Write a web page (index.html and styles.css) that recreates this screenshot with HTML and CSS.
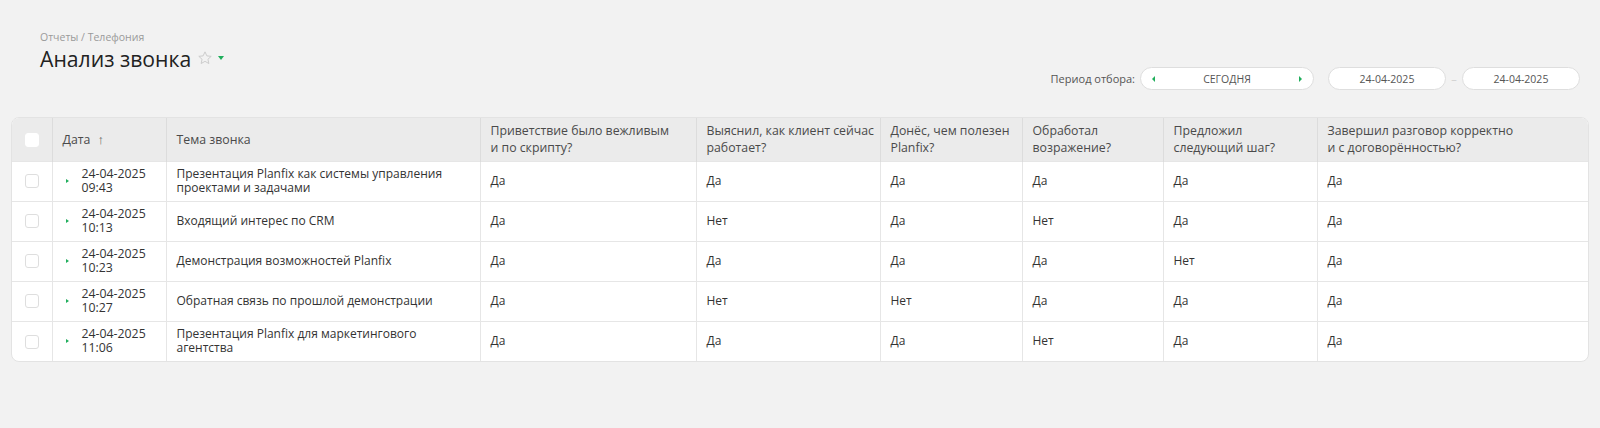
FILE: index.html
```html
<!DOCTYPE html>
<html lang="ru">
<head>
    <meta charset="UTF-8">
    <title>Анализ звонка</title>
    <link rel="stylesheet" href="styles.css">
</head>
<body>

    <div class="page-head">
        <div class="title-block">
            <div class="breadcrumb">Отчеты / Телефония</div>
            <div class="title-row">
                <h1>Анализ звонка</h1>
                <svg class="star" width="16" height="16" viewBox="0 0 24 24"><path d="M12 2.8l2.8 6 6.5.7-4.9 4.4 1.4 6.4L12 17l-5.8 3.3 1.4-6.4-4.9-4.4 6.5-.7z" fill="none" stroke="#c9c9c9" stroke-width="1.4" stroke-linejoin="round"/></svg>
                <span class="caret"></span>
            </div>
        </div>

        <div class="filter">
            <span class="filter-label">Период отбора:</span>
            <div class="pill period">
                <span class="arr arr-left"></span>
                <span>СЕГОДНЯ</span>
                <span class="arr arr-right"></span>
            </div>
            <div class="pill date">24-04-2025</div>
            <span class="dash">–</span>
            <div class="pill date">24-04-2025</div>
        </div>
    </div>

    <div class="grid-wrap">
        <table class="grid">
            <thead>
                <tr>
                    <th class="cb-cell c-cb"><span class="cb"></span></th>
                    <th class="c-date">Дата <span class="sort">↑</span></th>
                    <th class="c-topic">Тема звонка</th>
                    <th class="c-q1">Приветствие было вежливым<br>и по скрипту?</th>
                    <th class="c-q2">Выяснил, как клиент сейчас<br>работает?</th>
                    <th class="c-q3">Донёс, чем полезен<br>Planfix?</th>
                    <th class="c-q4">Обработал<br>возражение?</th>
                    <th class="c-q5">Предложил<br>следующий шаг?</th>
                    <th>Завершил разговор корректно<br>и с договорённостью?</th>
                </tr>
            </thead>
            <tbody id="rows"></tbody>
        </table>
    </div>

    <script>
        // calls: date, time, topic, answers
        const calls = [
            ["24-04-2025", "09:43", "Презентация Planfix как системы управления<br>проектами и задачами", ["Да", "Да", "Да", "Да", "Да", "Да"]],
            ["24-04-2025", "10:13", "Входящий интерес по CRM", ["Да", "Нет", "Да", "Нет", "Да", "Да"]],
            ["24-04-2025", "10:23", "Демонстрация возможностей Planfix", ["Да", "Да", "Да", "Да", "Нет", "Да"]],
            ["24-04-2025", "10:27", "Обратная связь по прошлой демонстрации", ["Да", "Нет", "Нет", "Да", "Да", "Да"]],
            ["24-04-2025", "11:06", "Презентация Planfix для маркетингового<br>агентства", ["Да", "Да", "Да", "Нет", "Да", "Да"]]
        ];

        const rows = document.getElementById("rows");
        calls.forEach(call => {
            const tr = document.createElement("tr");
            tr.innerHTML = `
                <td class="cb-cell"><span class="cb"></span></td>
                <td><div class="when"><span class="play"></span><span class="dt">${call[0]}<br>${call[1]}</span></div></td>
                <td>${call[2]}</td>
                ${call[3].map(a => `<td>${a}</td>`).join("")}
            `;
            rows.appendChild(tr);
        });
    </script>

</body>
</html>
```

FILE: styles.css
```css
body {
    margin: 0;
    padding: 0 11px;
    background-color: #f2f2f2;
    font-family: "Open Sans", "Noto Sans", sans-serif;
    color: #333;
}

.page-head {
    display: flex;
    justify-content: space-between;
    align-items: flex-start;
    padding: 30px 9px 0 29px;
    height: 88px;
    box-sizing: border-box;
}

.breadcrumb {
    font-size: 10.5px;
    color: #9a9a9a;
    line-height: 14px;
}

.title-row {
    display: flex;
    align-items: center;
    height: 28px;
}

h1 {
    margin: 0;
    font-size: 21.2px;
    font-weight: 400;
    color: #222;
}

.star {
    margin-left: 6px;
}

.caret {
    margin-left: 5px;
    width: 0;
    height: 0;
    border-left: 3.5px solid transparent;
    border-right: 3.5px solid transparent;
    border-top: 4px solid #1fae5b;
}

.filter {
    display: flex;
    align-items: center;
    margin-top: 37px;
    font-size: 11px;
    color: #555;
}

.filter-label {
    margin-right: 5px;
    color: #555;
}

.pill {
    flex-shrink: 0;
    height: 23px;
    box-sizing: border-box;
    border: 1px solid #dedede;
    border-radius: 12px;
    background: #fff;
    display: flex;
    align-items: center;
    justify-content: center;
    color: #555;
    font-size: 10.5px;
}

.period {
    width: 174px;
    justify-content: space-between;
    padding: 0 11px;
    margin-right: 14px;
}

.arr {
    width: 0;
    height: 0;
    border-top: 3px solid transparent;
    border-bottom: 3px solid transparent;
}

.arr-left {
    border-right: 3px solid #1fae5b;
}

.arr-right {
    border-left: 3px solid #1fae5b;
}

.date {
    width: 118px;
}

.dash {
    width: 16px;
    text-align: center;
    color: #d0d0d0;
}

.grid-wrap {
    margin-top: 29px;
    background: #fff;
    border: 1px solid #e3e3e3;
    border-radius: 8px;
    overflow: hidden;
}

.grid {
    width: 100%;
    border-collapse: collapse;
    table-layout: fixed;
    font-size: 12px;
}

.grid th,
.grid td {
    box-sizing: border-box;
}

.c-cb { width: 40px; }
.c-date { width: 114px; }
.c-topic { width: 314px; }
.c-q1 { width: 216px; }
.c-q2 { width: 184px; }
.c-q3 { width: 142px; }
.c-q4 { width: 141px; }
.c-q5 { width: 154px; }

.grid th {
    background: #ebebeb;
    font-weight: 400;
    font-size: 12.3px;
    color: #4a4a4a;
    text-align: left;
    padding: 0 10px;
    height: 43px;
    line-height: 17px;
    white-space: nowrap;
    border-left: 1px solid #dcdcdc;
    vertical-align: middle;
}

.grid td {
    padding: 0 10px;
    height: 40px;
    line-height: 14px;
    border-left: 1px solid #e6e6e6;
    border-top: 1px solid #e6e6e6;
    vertical-align: middle;
    color: #333;
}

.grid th:first-child,
.grid td:first-child {
    border-left: none;
}

.cb-cell {
    text-align: center !important;
    padding: 0 !important;
}

.cb {
    display: inline-block;
    width: 12px;
    height: 12px;
    border: 1px solid #dedede;
    border-radius: 3px;
    background: #fff;
    vertical-align: middle;
}

th .cb {
    border-color: #fff;
}

.sort {
    margin-left: 4px;
    font-size: 13px;
    color: #666;
}

.when {
    display: flex;
    align-items: center;
}

.play {
    flex-shrink: 0;
    width: 0;
    height: 0;
    border-top: 2.5px solid transparent;
    border-bottom: 2.5px solid transparent;
    border-left: 3px solid #1fae5b;
    margin: 0 13px 0 3px;
}

.dt {
    font-size: 12.3px;
    line-height: 14px;
    color: #333;
}
```
